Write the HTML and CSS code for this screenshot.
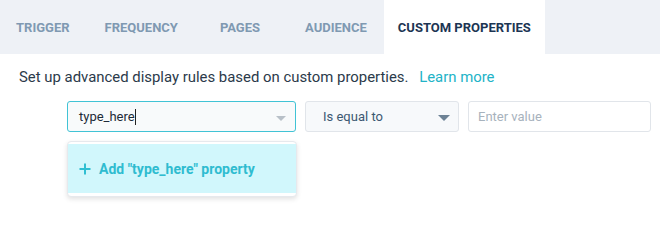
FILE: index.html
```html
<!DOCTYPE html>
<html>
<head>
<meta charset="utf-8">
<link rel="stylesheet" href="styles.css">
</head>
<body>
<div class="tabs">
  <div class="tab t1">Trigger</div>
  <div class="tab t2">Frequency</div>
  <div class="tab t3">Pages</div>
  <div class="tab t4">Audience</div>
  <div class="tab t5 active">Custom Properties</div>
</div>
<div class="content">
  <p class="desc">Set up advanced display rules based on custom properties. <a class="learn">Learn more</a></p>
  <div class="row">
    <div class="field-wrap">
      <div class="field prop">
        <span class="val">type_here</span><span class="caret"></span>
        <span class="arrow light"></span>
      </div>
      <div class="menu">
        <div class="menu-item">
          <svg class="plus" width="12" height="12" viewBox="0 0 12 12"><path d="M6 0.5V11.5M0.5 6H11.5" stroke="#2fbfd2" stroke-width="2"/></svg>
          <span>Add "type_here" property</span>
        </div>
      </div>
    </div>
    <div class="field op">
      <span class="val">Is equal to</span>
      <span class="arrow"></span>
    </div>
    <div class="field value">
      <span class="ph">Enter value</span>
    </div>
  </div>
</div>
</body>
</html>
```
FILE: styles.css
```css
* { box-sizing: border-box; }
html, body { margin: 0; padding: 0; background: #fff; }
body { font-family: Roboto, "Liberation Sans", sans-serif; width: 660px; height: 248px; overflow: hidden; }
.tabs { display: flex; height: 54px; background: #eef1f6; }
.tab { padding: 1px 14px 0; line-height: 53px; font-size: 13px; font-weight: 700; text-transform: uppercase; color: #7f99b2; }
.t1 { margin-left: 2px; }
.t2 { margin-left: 7px; }
.t3 { margin-left: 14px; }
.t4 { margin-left: 17px; }
.t5 { margin-left: 3px; }
.tab.active { background: #fff; color: #1c3553; }
.content { padding: 14px 0 0 19px; }
.desc { margin: 0; font-size: 14.9px; color: #2b3a4a; line-height: 18px; }
.learn { color: #22b3c7; margin-left: 7px; }
.row { display: flex; margin-top: 15px; margin-left: 48px; gap: 9px; }
.field-wrap { position: relative; }
.field { height: 31px; border: 1px solid #e1e5ea; border-radius: 3px; display: flex; align-items: center; position: relative; font-size: 13px; }
.prop { width: 229px; border-color: #41c3d5; background: #f8fafb; padding-left: 11px; color: #1e2b38; }
.caret { display: inline-block; width: 1px; height: 16px; background: #222; }
.op { width: 154px; background: #f7f9fb; padding-left: 17px; color: #3c5872; }
.value { width: 183px; padding-left: 9px; }
.ph { color: #a7b2bd; }
.arrow { position: absolute; right: 8px; top: 13px; width: 0; height: 0; border-left: 6px solid transparent; border-right: 6px solid transparent; border-top: 6px solid #6d8295; }
.arrow.light { right: 9px; top: 14px; border-left-width: 5px; border-right-width: 5px; border-top: 5px solid #b8c0c8; }
.menu { position: absolute; left: 0; top: 40px; width: 230px; height: 56px; background: #fff; border: 1px solid #e6e9ed; border-radius: 4px; box-shadow: 0 2px 5px rgba(0,0,0,0.12); padding: 2px 0; }
.menu-item { height: 49px; background: #d1f7fc; display: flex; align-items: center; padding-left: 11px; font-size: 14px; font-weight: 700; color: #2fbcd0; gap: 8px; }
.plus { flex: none; }
```
